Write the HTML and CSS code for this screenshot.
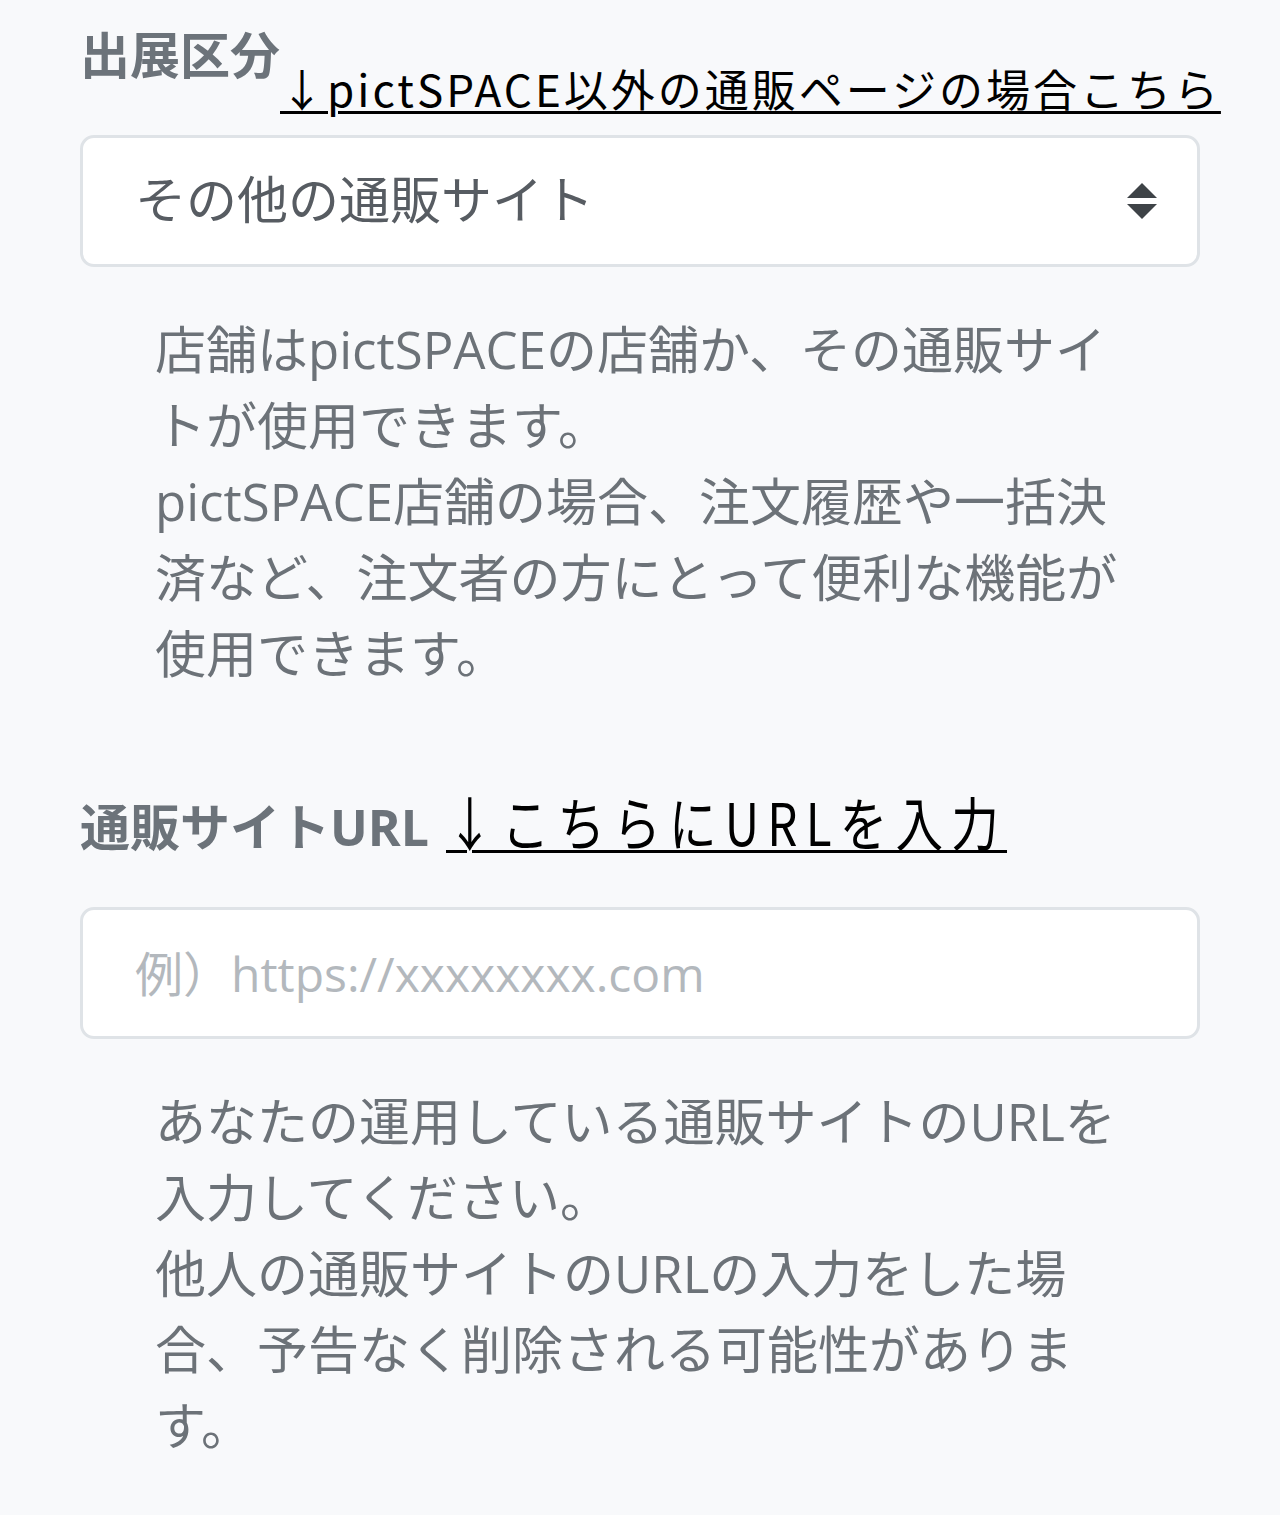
FILE: index.html
```html
<!DOCTYPE html>
<html lang="ja">
<head>
    <meta charset="UTF-8">
    <meta name="viewport" content="width=device-width, initial-scale=1.0">
    <title>出展設定</title>
    <link rel="stylesheet" href="styles.css">
</head>
<body>
    <div class="form">
        <div class="group">
            <div class="head">
                <label class="label">出展区分</label>
                <a class="note note-shop" href="#">↓pictSPACE以外の通販ページの場合こちら</a>
            </div>
            <div class="select">
                <span>その他の通販サイト</span>
                <svg class="caret" width="30" height="38" viewBox="0 0 30 38">
                    <path d="M15 1 L30 16 L0 16 Z" fill="#3e4347"/>
                    <path d="M0 22 L30 22 L15 37 Z" fill="#3e4347"/>
                </svg>
            </div>
            <p class="help">店舗はpictSPACEの店舗か、その通販サイトが使用できます。<br>pictSPACE店舗の場合、注文履歴や一括決済など、注文者の方にとって便利な機能が使用できます。</p>
        </div>
        <div class="group group-url">
            <div class="head head-url">
                <label class="label">通販サイトURL</label>
                <a class="note note-url" href="#">↓こちらにURLを入力</a>
            </div>
            <input type="text" class="input" placeholder="例）https://xxxxxxxx.com">
            <p class="help">あなたの運用している通販サイトのURLを入力してください。<br>他人の通販サイトのURLの入力をした場合、予告なく削除される可能性があります。</p>
        </div>
    </div>
</body>
</html>
```
FILE: styles.css
```css
body {
    margin: 0;
    background: #f8f9fb;
    font-family: "Open Sans", "Noto Sans CJK JP", sans-serif;
}
.form {
    width: 1120px;
    padding: 25px 80px 0;
}
.head {
    display: flex;
    align-items: flex-start;
    white-space: nowrap;
}
.head-url {
    align-items: baseline;
    gap: 17px;
}
.label {
    flex-shrink: 0;
    font-size: 50px;
    font-weight: 700;
    line-height: 60px;
    color: #6c737a;
}
.note {
    flex-shrink: 0;
    color: #000;
    font-family: "Noto Sans CJK JP", sans-serif;
    text-decoration: underline;
    text-decoration-thickness: 3px;
    text-underline-offset: 4px;
}
.note-shop {
    margin-top: 38px;
    font-size: 44px;
    line-height: 50px;
    letter-spacing: 3px;
}
.note-url {
    display: inline-block;
    font-size: 58px;
    line-height: 60px;
    letter-spacing: 10px;
    transform: scaleX(0.82);
    transform-origin: left bottom;
}
.select, .input {
    box-sizing: border-box;
    width: 100%;
    height: 132px;
    border: 3px solid #dfe3e7;
    border-radius: 14px;
    background: #fff;
}
.select {
    margin-top: 22px;
    display: flex;
    align-items: center;
    justify-content: space-between;
    padding: 0 40px 8px 52px;
    font-size: 51px;
    color: #575c62;
}
.select .caret {
    margin-top: 8px;
}
.input {
    display: block;
    margin-top: 50px;
    padding: 0 0 0 52px;
    font-family: "Open Sans", "Noto Sans CJK JP", sans-serif;
    font-size: 48px;
    outline: none;
}
.input::placeholder {
    color: #b3b8bd;
}
.help {
    width: 985px;
    margin: 44px 0 0 75px;
    font-size: 51px;
    line-height: 76px;
    color: #6c7278;
}
.group-url {
    margin-top: 100px;
}
```
